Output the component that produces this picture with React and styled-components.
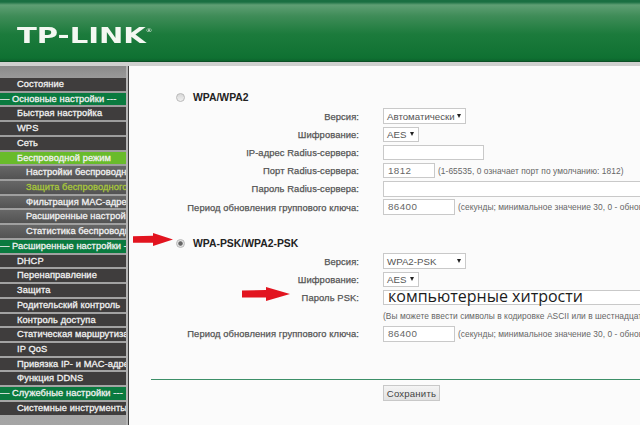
import React from 'react';
import styled, { createGlobalStyle } from 'styled-components';

const GlobalStyle = createGlobalStyle`
    html, body {
        margin: 0;
        padding: 0;
        background: #fbfbfb;
        overflow: hidden;
    }
`

const Page = styled.div`
    position: relative;
    width: 640px;
    height: 425px;
    overflow: hidden;
    font-family: "Liberation Sans", Arial, sans-serif;
    filter: blur(0.35px);
`

const Header = styled.div`
    height: 62px;
    box-sizing: border-box;
    padding: 23px 0 0 17px;
    background: linear-gradient(180deg, #1a6f42 0, #1a6f42 2px, #5f9f74 5px, #3f8c58 16px, #1c7b3c 34px, #0f7132 58px, #0b5f2b 62px);
    border-bottom: 1px solid #0b4f26;
`

const Logo = styled.div`
    display: inline-flex;
    align-items: flex-start;
    color: #f4f8f2;
    font-family: "DejaVu Sans", sans-serif;
    font-weight: bold;
    font-size: 22px;
    line-height: 26px;
    transform: scaleX(1.32);
    transform-origin: left top;
    sup {
        font-size: 5px;
        line-height: 14px;
        font-weight: normal;
    }
`

const Body = styled.div`
    display: flex;
    height: 363px;
    border-top: 4px solid #cfd0cf;
`

const Sidebar = styled.div`
    width: 126px;
    flex-shrink: 0;
    box-sizing: border-box;
    padding-top: 12px;
    background: linear-gradient(180deg, #8a8a8a 0, #9c9c9c 14px, #a5a5a5 100%);
    overflow: hidden;
`

const Divider = styled.div`
    width: 3px;
    flex-shrink: 0;
    background: linear-gradient(90deg, #b5b5b5 0, #b5b5b5 2px, #3e3e3e 2px);
`

const rowColors = {
    item: '#3f3d3d',
    section: '#0a7a3f',
    active: '#69bb2b',
    sub: 'linear-gradient(180deg, #676767, #535353)',
    subActive: 'linear-gradient(180deg, #676767, #535353)',
}

const MenuRow = styled.div`
    height: 12.73px;
    margin-bottom: 2px;
    line-height: 13px;
    white-space: nowrap;
    overflow: hidden;
    font-size: 9.3px;
    -webkit-text-stroke: 0.3px currentColor;
    letter-spacing: 0.08px;
    color: ${p => p.$kind === 'subActive' ? '#a8c83a' : '#f1f1f1'};
    background: ${p => rowColors[p.$kind]};
    padding-left: ${p => p.$kind === 'section' ? '0' : p.$kind === 'sub' || p.$kind === 'subActive' ? '26px' : '17px'};
`

const Main = styled.div`
    flex: 1;
    min-width: 0;
    box-sizing: border-box;
    padding: 22px 0 0 22px;
    background: #fbfbfb;
    overflow: hidden;
`

const SectionTitle = styled.div`
    display: flex;
    align-items: center;
    gap: 8px;
    height: 18px;
    margin-left: 25px;
    font-size: 10.4px;
    font-weight: bold;
    color: #222;
    white-space: nowrap;
`

const Radio = styled.span`
    width: 9px;
    height: 9px;
    box-sizing: border-box;
    border-radius: 50%;
    border: 1px solid #b9b9b9;
    background: ${p => p.$checked ? 'radial-gradient(circle, #666 0, #666 1.8px, #e2e2e2 2.6px)' : 'linear-gradient(180deg, #d8d8d8, #f0f0f0)'};
`

const Form = styled.div`
    display: grid;
    grid-template-columns: 208px 1fr;
    column-gap: 24px;
    grid-auto-rows: 18.2px;
    align-items: center;
    margin-top: ${p => p.$top || 0}px;
    margin-bottom: ${p => p.$gap || 0}px;
`

const Label = styled.div`
    text-align: right;
    white-space: nowrap;
    font-size: 9.4px;
    -webkit-text-stroke: 0.25px currentColor;
    letter-spacing: 0.08px;
    color: #555;
`

const Field = styled.div`
    display: flex;
    align-items: center;
    gap: 3px;
    white-space: nowrap;
    min-width: 0;
`

const Input = styled.div`
    box-sizing: border-box;
    width: ${p => p.$w}px;
    flex-shrink: 0;
    height: 15.5px;
    padding-left: 4px;
    border: 1px solid #c9c9c9;
    background: #fff;
    font-size: 9.8px;
    line-height: 14px;
    letter-spacing: 0.4px;
    color: #666;
`

const BigInput = styled(Input)`
    font-family: "Open Sans", "Noto Sans", sans-serif;
    font-size: 16px;
    line-height: 10px;
    letter-spacing: 0;
    color: #1c1c1c;
    overflow: visible;
`

const Select = styled.div`
    display: flex;
    align-items: center;
    justify-content: space-between;
    box-sizing: border-box;
    width: ${p => p.$w}px;
    height: 15.5px;
    padding: 0 4px 0 3px;
    border: 1px solid #c9c9c9;
    background: #fff;
    font-size: 9.7px;
    color: #555;
    &::after {
        content: '';
        border-left: 2.5px solid transparent;
        border-right: 2.5px solid transparent;
        border-top: 4px solid #222;
    }
`

const Hint = styled.span`
    font-size: 8.4px;
    letter-spacing: 0.05px;
    color: #666;
`

const HintRow = styled.div`
    grid-column: 2;
    white-space: nowrap;
    font-size: 8.4px;
    letter-spacing: 0.05px;
    color: #666;
`

const Rule = styled.div`
    height: 1px;
    margin: 36px 0 5px;
    background: #3d8f68;
`

const SaveRow = styled.div`
    padding-left: 232px;
`

const SaveButton = styled.button`
    display: block;
    box-sizing: border-box;
    width: 57px;
    height: 16px;
    padding: 0;
    border: 1px solid #c8c8c8;
    background: linear-gradient(180deg, #f4f4f4, #e2e2e2);
    font-family: inherit;
    font-size: 9.6px;
    letter-spacing: 0.2px;
    color: #444;
`

const Arrow = styled.svg`
    position: absolute;
    left: ${p => p.$x}px;
    top: ${p => p.$y}px;
    width: ${p => p.$w}px;
    height: ${p => p.$h}px;
`

const menu = [
    ['item', 'Состояние'],
    ['section', '— Основные настройки ---'],
    ['item', 'Быстрая настройка'],
    ['item', 'WPS'],
    ['item', 'Сеть'],
    ['active', 'Беспроводной режим'],
    ['sub', 'Настройки беспроводного режима'],
    ['subActive', 'Защита беспроводного режима'],
    ['sub', 'Фильтрация MAC-адресов'],
    ['sub', 'Расширенные настройки'],
    ['sub', 'Статистика беспроводного режима'],
    ['section', '— Расширенные настройки ---'],
    ['item', 'DHCP'],
    ['item', 'Перенаправление'],
    ['item', 'Защита'],
    ['item', 'Родительский контроль'],
    ['item', 'Контроль доступа'],
    ['item', 'Статическая маршрутизация'],
    ['item', 'IP QoS'],
    ['item', 'Привязка IP- и MAC-адресов'],
    ['item', 'Функция DDNS'],
    ['section', '— Служебные настройки ---'],
    ['item', 'Системные инструменты'],
]

const hintPeriod = '(секунды; минимальное значение 30, 0 - обновление отключено)'

const RedArrow = ({ x, y, w, h }) => (
    <Arrow $x={x} $y={y} $w={w} $h={h} viewBox="0 0 48 14" preserveAspectRatio="none">
        <path d="M0 3.5 L24 3 L24 0 L48 7 L24 14 L24 10.5 L0 10.5 Z" fill="#e2141f" />
    </Arrow>
)

const App = () => {
    return (
        <Page>
            <GlobalStyle />
            <Header>
                <Logo>TP-LINK<sup>®</sup></Logo>
            </Header>
            <Body>
                <Sidebar>
                    {menu.map(([kind, text], i) => (
                        <MenuRow key={i} $kind={kind}>{text}</MenuRow>
                    ))}
                </Sidebar>
                <Divider />
                <Main>
                    <SectionTitle><Radio />WPA/WPA2</SectionTitle>
                    <Form $top={1} $gap={18}>
                        <Label>Версия:</Label>
                        <Field><Select $w={83}>Автоматически</Select></Field>
                        <Label>Шифрование:</Label>
                        <Field><Select $w={36}>AES</Select></Field>
                        <Label>IP-адрес Radius-сервера:</Label>
                        <Field><Input $w={101} /></Field>
                        <Label>Порт Radius-сервера:</Label>
                        <Field><Input $w={52}>1812</Input><Hint>(1-65535, 0 означает порт по умолчанию: 1812)</Hint></Field>
                        <Label>Пароль Radius-сервера:</Label>
                        <Field><Input $w={300} /></Field>
                        <Label>Период обновления группового ключа:</Label>
                        <Field><Input $w={72}>86400</Input><Hint>{hintPeriod}</Hint></Field>
                    </Form>
                    <SectionTitle><Radio $checked />WPA-PSK/WPA2-PSK</SectionTitle>
                    <Form>
                        <Label>Версия:</Label>
                        <Field><Select $w={83}>WPA2-PSK</Select></Field>
                        <Label>Шифрование:</Label>
                        <Field><Select $w={36}>AES</Select></Field>
                        <Label>Пароль PSK:</Label>
                        <Field><BigInput $w={300}>компьютерные хитрости</BigInput></Field>
                        <HintRow>(Вы можете ввести символы в кодировке ASCII или в шестнадцатеричном формате)</HintRow>
                        <Label>Период обновления группового ключа:</Label>
                        <Field><Input $w={72}>86400</Input><Hint>{hintPeriod}</Hint></Field>
                    </Form>
                    <Rule />
                    <SaveRow>
                        <SaveButton>Сохранить</SaveButton>
                    </SaveRow>
                </Main>
            </Body>
            <RedArrow x={133} y={233} w={40} h={13} />
            <RedArrow x={242} y={287} w={48} h={14} />
        </Page>
    );
};

export default App;
